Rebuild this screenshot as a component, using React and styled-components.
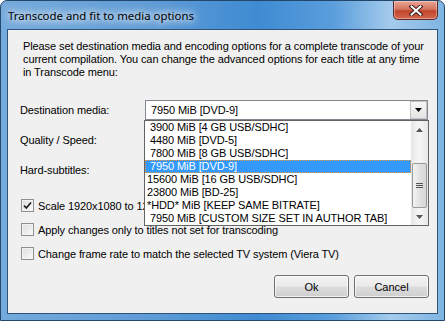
import React from 'react';
import styled, { createGlobalStyle } from 'styled-components';

const GlobalStyle = createGlobalStyle`
  html, body {
    margin: 0;
    padding: 0;
    background: #ffffff;
  }
  body {
    width: 445px;
    height: 321px;
    overflow: hidden;
    font-family: "Liberation Sans", Arial, sans-serif;
  }
`;

const Window = styled.div`
  width: 445px;
  height: 321px;
  box-sizing: border-box;
  display: flex;
  flex-direction: column;
  padding: 0 6px 6px;
  border: 1px solid #23476b;
  border-radius: 7px 7px 0 0;
  background: linear-gradient(90deg, #74aadc 0%, #5d9bd6 35%, #3f8bd2 58%, #5a9edc 75%, #a4cbec 88%, #7fb4e2 100%);
`;

const TitleBar = styled.div`
  height: 28px;
  display: flex;
  justify-content: space-between;
  align-items: flex-start;
`;

const Title = styled.div`
  margin: 7px 0 0 1px;
  font-family: "Noto Sans", "Open Sans", sans-serif;
  font-size: 11.4px;
  line-height: 16px;
  color: #000;
  text-shadow: 0 0 6px #fff, 0 0 10px #fff, 0 0 16px rgba(255, 255, 255, 0.9);
`;

const CloseButton = styled.div`
  width: 45px;
  height: 19px;
  box-sizing: border-box;
  display: flex;
  align-items: center;
  justify-content: center;
  border: 1px solid #5a2a24;
  border-top: none;
  border-radius: 0 0 5px 5px;
  background: linear-gradient(180deg, #e8a493 0%, #d47662 45%, #c2432c 55%, #d2694e 100%);
  box-shadow: inset 0 0 0 1px rgba(255, 255, 255, 0.35);
`;

const Client = styled.div`
  flex: 1;
  display: flex;
  flex-direction: column;
  background: #f0f0f0;
  border: 1px solid #2f5479;
  font-size: 11px;
  letter-spacing: -0.1px;
  color: #000;
`;

const Intro = styled.p`
  margin: 10px 0 0 15px;
  line-height: 13px;
`;

const Form = styled.div`
  margin-top: 21px;
  display: flex;
  flex-direction: column;
  gap: 10px;
`;

const Row = styled.div`
  display: flex;
  align-items: center;
  height: 20px;
`;

const Label = styled.div`
  width: 137px;
  box-sizing: border-box;
  padding-left: 12px;
`;

const ComboWrap = styled.div`
  position: relative;
  width: 283px;
  height: 20px;
`;

const Combo = styled.div`
  width: 100%;
  height: 100%;
  box-sizing: border-box;
  display: flex;
  align-items: center;
  justify-content: space-between;
  background: #fff;
  border: 1px solid #828790;
  padding: 0 0 0 5px;
`;

const ComboButton = styled.div`
  width: 17px;
  height: 18px;
  box-sizing: border-box;
  display: flex;
  align-items: center;
  justify-content: center;
  background: linear-gradient(180deg, #f6f6f6, #e4e4e4);
  border: 1px solid #c2c2c2;
`;

const List = styled.div`
  position: absolute;
  top: 20px;
  left: -1px;
  width: 285px;
  height: 106px;
  box-sizing: border-box;
  z-index: 10;
  display: flex;
  background: #fff;
  border: 1px solid #646464;
`;

const Items = styled.div`
  flex: 1;
  display: flex;
  flex-direction: column;
`;

const Item = styled.div`
  height: 13px;
  line-height: 13px;
  box-sizing: border-box;
  padding-left: ${(p) => (p.$indent ? 5 : 2)}px;
  white-space: nowrap;
  background: ${(p) => (p.$selected ? '#3399ff' : 'transparent')};
  color: ${(p) => (p.$selected ? '#fff' : '#000')};
  outline: ${(p) => (p.$selected ? '1px dotted #e8983a' : 'none')};
  outline-offset: -1px;
`;

const ScrollBar = styled.div`
  width: 17px;
  display: flex;
  flex-direction: column;
  align-items: center;
  background: linear-gradient(90deg, #e6e6e6, #f4f4f4 40%, #f4f4f4 60%, #e6e6e6);
`;

const ArrowCell = styled.div`
  height: 17px;
  width: 17px;
  display: flex;
  align-items: center;
  justify-content: center;
`;

const Track = styled.div`
  flex: 1;
  width: 100%;
  box-sizing: border-box;
  padding-top: 25px;
`;

const Thumb = styled.div`
  width: 15px;
  height: 45px;
  margin: 0 auto;
  box-sizing: border-box;
  display: flex;
  align-items: center;
  justify-content: center;
  border: 1px solid #9a9a9a;
  border-radius: 2px;
  background: linear-gradient(90deg, #f3f3f3, #e2e2e2 50%, #d6d6d6);
`;

const Checks = styled.div`
  margin-top: 19px;
  display: flex;
  flex-direction: column;
  gap: 11px;
`;

const CheckRow = styled.label`
  display: flex;
  align-items: center;
  height: 13px;
  padding-left: 13px;
  gap: 4px;
  white-space: nowrap;
`;

const Box = styled.span`
  width: 13px;
  height: 13px;
  box-sizing: border-box;
  display: inline-flex;
  align-items: center;
  justify-content: center;
  border: 1px solid #8f8f8f;
  background: linear-gradient(135deg, #dcdcdc, #fbfbfb);
  box-shadow: inset 0 0 0 1px #f4f4f4;
`;

const Buttons = styled.div`
  margin-top: 15px;
  display: flex;
  justify-content: flex-end;
  gap: 5px;
  padding-right: 8px;
`;

const Button = styled.button`
  width: 75px;
  height: 23px;
  box-sizing: border-box;
  padding: 0;
  font-family: "Liberation Sans", Arial, sans-serif;
  font-size: 11px;
  color: #000;
  border: 1px solid #707070;
  border-radius: 3px;
  background: linear-gradient(180deg, #f2f2f2 0%, #ebebeb 48%, #dddddd 52%, #cfcfcf 100%);
  box-shadow: inset 0 0 0 1px rgba(255, 255, 255, 0.7);
`;

const DownTri = () => (
  <svg width="7" height="4" viewBox="0 0 7 4">
    <path d="M0 0H7L3.5 4Z" fill="#000" />
  </svg>
);

const UpArrow = () => (
  <svg width="7" height="4" viewBox="0 0 7 4">
    <path d="M0 4H7L3.5 0Z" fill="#555" />
  </svg>
);

const DownArrow = () => (
  <svg width="7" height="4" viewBox="0 0 7 4">
    <path d="M0 0H7L3.5 4Z" fill="#555" />
  </svg>
);

const Grip = () => (
  <svg width="7" height="7" viewBox="0 0 7 7">
    <path d="M0 1.5H7M0 3.5H7M0 5.5H7" stroke="#555" strokeWidth="1" />
  </svg>
);

const CloseIcon = () => (
  <svg width="14" height="11" viewBox="0 0 14 11">
    <path d="M2.5 1.5L11.5 9.5M11.5 1.5L2.5 9.5" stroke="#3b1a16" strokeWidth="4" strokeLinecap="square" />
    <path d="M2.5 1.5L11.5 9.5M11.5 1.5L2.5 9.5" stroke="#fff" strokeWidth="2" strokeLinecap="square" />
  </svg>
);

const CheckMark = () => (
  <svg width="9" height="9" viewBox="0 0 9 9">
    <path d="M1 4.5L3.3 7L8 1.5" fill="none" stroke="#1a1a1a" strokeWidth="1.6" />
  </svg>
);

const media = [
  { text: '3900 MiB [4 GB USB/SDHC]', indent: true },
  { text: '4480 MiB [DVD-5]', indent: true },
  { text: '7800 MiB [8 GB USB/SDHC]', indent: true },
  { text: '7950 MiB [DVD-9]', indent: true, selected: true },
  { text: '15600 MiB [16 GB USB/SDHC]' },
  { text: '23800 MiB [BD-25]' },
  { text: '*HDD* MiB [KEEP SAME BITRATE]' },
  { text: '7950 MiB [CUSTOM SIZE SET IN AUTHOR TAB]', indent: true },
];

const options = [
  { text: 'Scale 1920x1080 to 1280x720', checked: true },
  { text: 'Apply changes only to titles not set for transcoding' },
  { text: 'Change frame rate to match the selected TV system (Viera TV)' },
];

export default function App() {
  return (
    <>
      <GlobalStyle />
      <Window>
        <TitleBar>
          <Title>Transcode and fit to media options</Title>
          <CloseButton>
            <CloseIcon />
          </CloseButton>
        </TitleBar>
        <Client>
          <Intro>
            Please set destination media and encoding options for a complete transcode of your
            <br />
            current compilation. You can change the advanced options for each title at any time
            <br />
            in Transcode menu:
          </Intro>

          <Form>
            <Row>
              <Label>Destination media:</Label>
              <ComboWrap>
                <Combo>
                  <span>7950 MiB [DVD-9]</span>
                  <ComboButton>
                    <DownTri />
                  </ComboButton>
                </Combo>
                <List>
                  <Items>
                    {media.map((m) => (
                      <Item key={m.text} $indent={m.indent} $selected={m.selected}>
                        {m.text}
                      </Item>
                    ))}
                  </Items>
                  <ScrollBar>
                    <ArrowCell>
                      <UpArrow />
                    </ArrowCell>
                    <Track>
                      <Thumb>
                        <Grip />
                      </Thumb>
                    </Track>
                    <ArrowCell>
                      <DownArrow />
                    </ArrowCell>
                  </ScrollBar>
                </List>
              </ComboWrap>
            </Row>
            <Row>
              <Label>Quality / Speed:</Label>
              <ComboWrap>
                <Combo>
                  <span />
                </Combo>
              </ComboWrap>
            </Row>
            <Row>
              <Label>Hard-subtitles:</Label>
              <ComboWrap>
                <Combo>
                  <span />
                </Combo>
              </ComboWrap>
            </Row>
          </Form>

          <Checks>
            {options.map((o) => (
              <CheckRow key={o.text}>
                <Box>{o.checked && <CheckMark />}</Box>
                {o.text}
              </CheckRow>
            ))}
          </Checks>

          <Buttons>
            <Button>Ok</Button>
            <Button>Cancel</Button>
          </Buttons>
        </Client>
      </Window>
    </>
  );
}
